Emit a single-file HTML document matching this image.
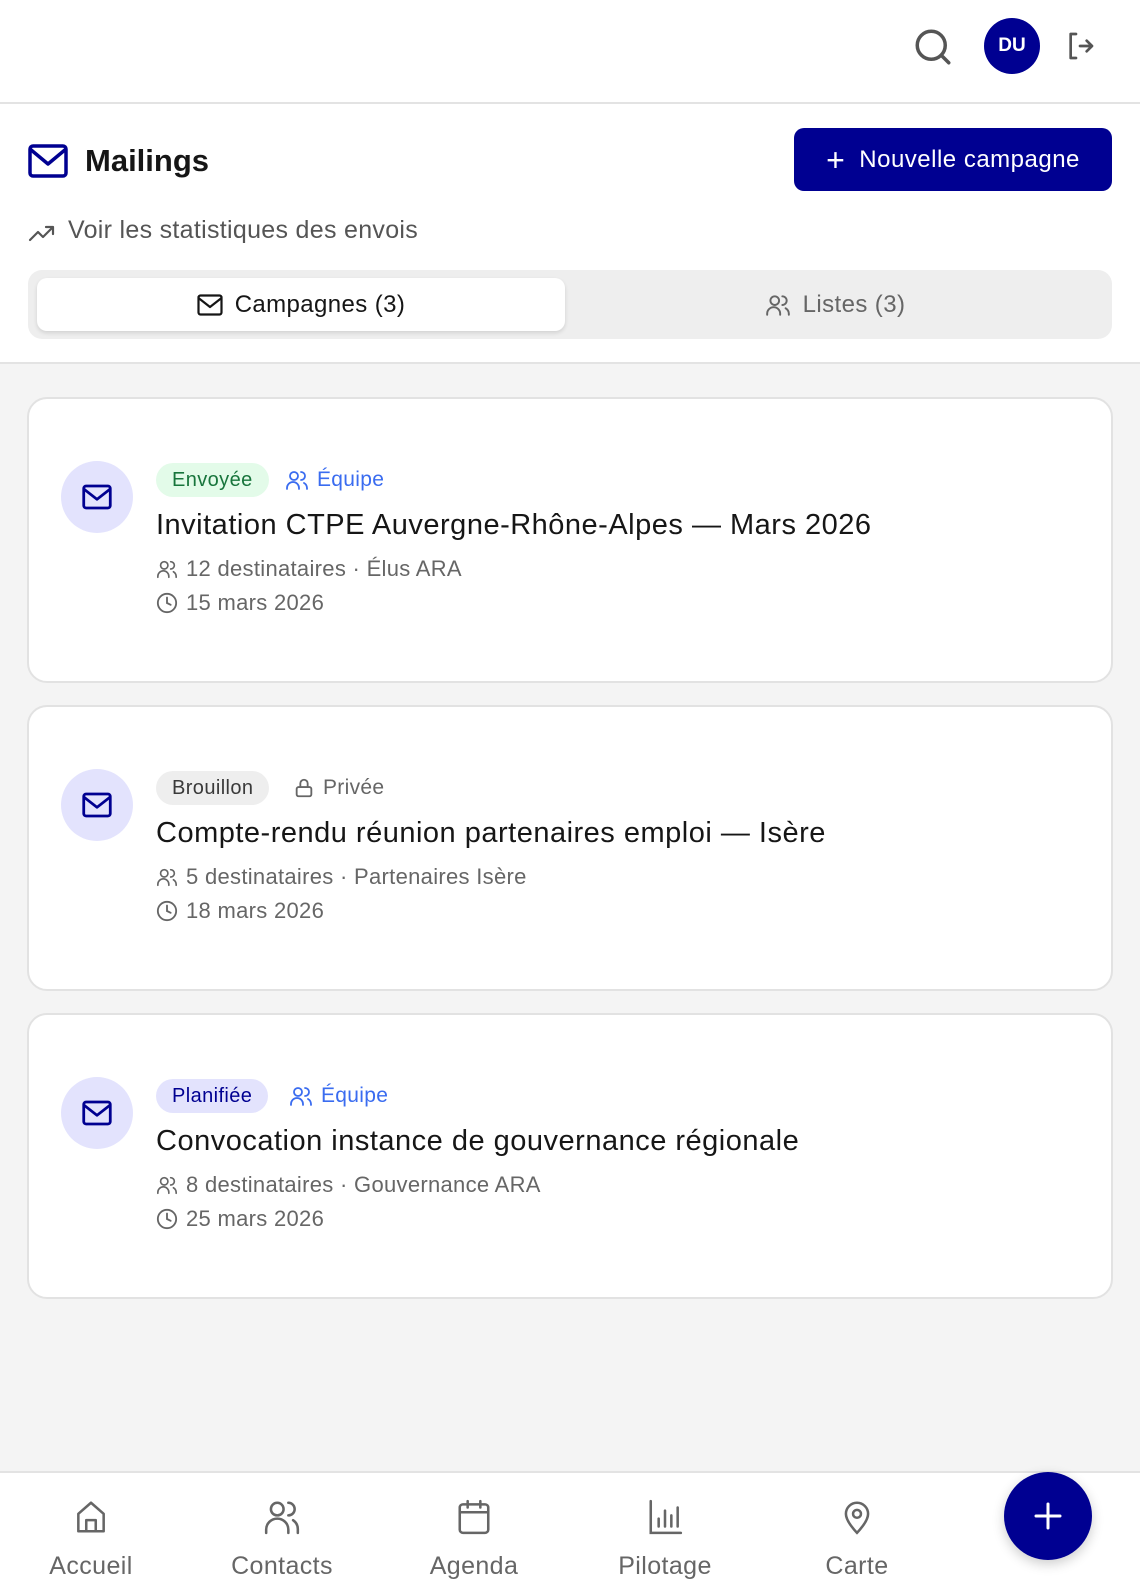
<!DOCTYPE html>
<html><head><meta charset="utf-8"><style>
*{box-sizing:border-box;margin:0;padding:0}
body{width:1140px;height:1592px;background:#f4f4f4;font-family:"Liberation Sans",sans-serif;position:relative;overflow:hidden;color:#161616}
.abs{position:absolute}
svg{display:block}
.top{position:absolute;left:0;top:0;width:1140px;height:364px;background:#fff;border-bottom:2px solid #e3e3e3}
.hdrline{position:absolute;left:0;top:102px;width:1140px;height:2px;background:#e3e3e3}
.card{position:absolute;left:27px;width:1086px;height:286px;background:#fff;border:2px solid #e2e2e2;border-radius:20px}
.circ{position:absolute;left:32px;top:62px;width:72px;height:72px;border-radius:50%;background:#e3e3fd;display:flex;align-items:center;justify-content:center}
.badge{position:absolute;left:127px;top:64px;height:34px;border-radius:17px;padding:0 16px;font-size:20px;line-height:34px;letter-spacing:.4px}
.tag{position:absolute;top:64px;height:34px;line-height:34px;font-size:21px;display:flex;align-items:center;gap:8px;letter-spacing:.3px}
.ttl{position:absolute;left:127px;top:110px;font-size:29px;letter-spacing:.5px;color:#161616;white-space:nowrap}
.meta{position:absolute;left:127px;font-size:22px;letter-spacing:.3px;color:#666;display:flex;align-items:center;gap:8px;white-space:nowrap}
.nav{position:absolute;left:0;top:1471px;width:1140px;height:121px;background:#fff;border-top:2px solid #e3e3e3}
.ni{position:absolute;top:24px;width:150px;text-align:center;color:#666;font-size:25px;letter-spacing:.4px}
.ni svg{margin:0 auto 15px}
</style></head><body>
<div class="top"></div>
<div class="hdrline"></div>
<svg class="abs" style="left:912px;top:26px" width="42" height="42" viewBox="0 0 24 24" fill="none" stroke="#555" stroke-width="2" stroke-linecap="round"><circle cx="11" cy="11" r="8"/><path d="M17 17l4 4"/></svg>
<div class="abs" style="left:984px;top:18px;width:56px;height:56px;border-radius:50%;background:#000091;color:#fff;font-weight:bold;font-size:19px;line-height:56px;text-align:center">DU</div>
<svg class="abs" style="left:1064px;top:30px" width="32" height="32" viewBox="0 0 24 24" fill="none" stroke="#555" stroke-width="2" stroke-linecap="round" stroke-linejoin="round"><path d="M9 3H5v18h4M12 12h9M17 8l4 4-4 4"/></svg>
<svg class="abs" style="left:28px;top:144px" width="40" height="34" viewBox="0 0 40 34" fill="none" stroke="#000091" stroke-width="3.5" stroke-linejoin="round"><rect x="2" y="2" width="36" height="30" rx="3"/><path d="M2 5l18 15L38 5"/></svg>
<div class="abs" style="left:85px;top:143px;font-size:31px;font-weight:bold">Mailings</div>
<div class="abs" style="left:794px;top:128px;width:318px;height:63px;background:#000091;border-radius:10px;color:#fff;font-size:24px;letter-spacing:.5px;display:flex;align-items:center;justify-content:center;gap:14px"><span style="font-size:32px;font-weight:300;line-height:1">+</span>Nouvelle campagne</div>
<svg class="abs" style="left:28px;top:222px" width="28" height="22" viewBox="0 0 28 22" fill="none" stroke="#555" stroke-width="2.2" stroke-linecap="round" stroke-linejoin="round"><path d="M2 18l8-8 5 5 10-10M18 5h7v7"/></svg>
<div class="abs" style="left:68px;top:216px;font-size:25px;letter-spacing:.3px;color:#555">Voir les statistiques des envois</div>
<div class="abs" style="left:28px;top:270px;width:1084px;height:69px;background:#eee;border-radius:14px"></div>
<div class="abs" style="left:37px;top:278px;width:528px;height:53px;background:#fff;border-radius:10px;box-shadow:0 2px 4px rgba(0,0,0,.12);display:flex;align-items:center;justify-content:center;gap:12px;font-size:24px;letter-spacing:.4px;color:#161616">
<svg width="26" height="22" viewBox="0 0 26 22" fill="none" stroke="#161616" stroke-width="2.2" stroke-linejoin="round"><rect x="1.5" y="1.5" width="23" height="19" rx="2"/><path d="M1.5 4l11.5 9L24.5 4"/></svg>Campagnes (3)</div>
<div class="abs" style="left:565px;top:278px;width:540px;height:53px;display:flex;align-items:center;justify-content:center;gap:12px;font-size:24px;letter-spacing:.4px;color:#666">
<svg width="26" height="26" viewBox="0 0 24 24" fill="none" stroke="#666" stroke-width="1.8" stroke-linecap="round"><circle cx="9" cy="8" r="4"/><path d="M2 21v-1a6 6 0 0 1 12 0v1M16 4a4 4 0 0 1 0 8M19 15a6 6 0 0 1 3 5v1"/></svg>Listes (3)</div>

<div class="card" style="top:397px">
 <div class="circ"><svg width="30" height="26" viewBox="0 0 26 22" fill="none" stroke="#000091" stroke-width="2.4" stroke-linejoin="round"><rect x="1.5" y="1.5" width="23" height="19" rx="2"/><path d="M1.5 4l11.5 9L24.5 4"/></svg></div>
 <div class="badge" style="background:#e3fbe9;color:#18753c">Envoyée</div>
 <div class="tag" style="left:256px;color:#3a6cf0"><svg width="24" height="24" viewBox="0 0 24 24" fill="none" stroke="#3a6cf0" stroke-width="1.8" stroke-linecap="round"><circle cx="9" cy="8" r="4"/><path d="M2 21v-1a6 6 0 0 1 12 0v1M16 4a4 4 0 0 1 0 8M19 15a6 6 0 0 1 3 5v1"/></svg>Équipe</div>
 <div class="ttl">Invitation CTPE Auvergne-Rhône-Alpes — Mars 2026</div>
 <div class="meta" style="top:157px"><svg width="22" height="22" viewBox="0 0 24 24" fill="none" stroke="#666" stroke-width="1.8" stroke-linecap="round"><circle cx="9" cy="8" r="4"/><path d="M2 21v-1a6 6 0 0 1 12 0v1M16 4a4 4 0 0 1 0 8M19 15a6 6 0 0 1 3 5v1"/></svg>12 destinataires · Élus ARA</div>
 <div class="meta" style="top:191px"><svg width="22" height="22" viewBox="0 0 24 24" fill="none" stroke="#666" stroke-width="2" stroke-linecap="round"><circle cx="12" cy="12" r="10"/><path d="M12 6v6l4 2"/></svg>15 mars 2026</div>
</div>
<div class="card" style="top:705px">
 <div class="circ"><svg width="30" height="26" viewBox="0 0 26 22" fill="none" stroke="#000091" stroke-width="2.4" stroke-linejoin="round"><rect x="1.5" y="1.5" width="23" height="19" rx="2"/><path d="M1.5 4l11.5 9L24.5 4"/></svg></div>
 <div class="badge" style="background:#eee;color:#3a3a3a">Brouillon</div>
 <div class="tag" style="left:264px;color:#666"><svg width="22" height="22" viewBox="0 0 24 24" fill="none" stroke="#666" stroke-width="2" stroke-linecap="round"><rect x="4" y="11" width="16" height="10" rx="2"/><path d="M8 11V7a4 4 0 0 1 8 0v4"/></svg>Privée</div>
 <div class="ttl">Compte-rendu réunion partenaires emploi — Isère</div>
 <div class="meta" style="top:157px"><svg width="22" height="22" viewBox="0 0 24 24" fill="none" stroke="#666" stroke-width="1.8" stroke-linecap="round"><circle cx="9" cy="8" r="4"/><path d="M2 21v-1a6 6 0 0 1 12 0v1M16 4a4 4 0 0 1 0 8M19 15a6 6 0 0 1 3 5v1"/></svg>5 destinataires · Partenaires Isère</div>
 <div class="meta" style="top:191px"><svg width="22" height="22" viewBox="0 0 24 24" fill="none" stroke="#666" stroke-width="2" stroke-linecap="round"><circle cx="12" cy="12" r="10"/><path d="M12 6v6l4 2"/></svg>18 mars 2026</div>
</div>
<div class="card" style="top:1013px">
 <div class="circ"><svg width="30" height="26" viewBox="0 0 26 22" fill="none" stroke="#000091" stroke-width="2.4" stroke-linejoin="round"><rect x="1.5" y="1.5" width="23" height="19" rx="2"/><path d="M1.5 4l11.5 9L24.5 4"/></svg></div>
 <div class="badge" style="background:#e3e3fd;color:#000091">Planifiée</div>
 <div class="tag" style="left:260px;color:#3a6cf0"><svg width="24" height="24" viewBox="0 0 24 24" fill="none" stroke="#3a6cf0" stroke-width="1.8" stroke-linecap="round"><circle cx="9" cy="8" r="4"/><path d="M2 21v-1a6 6 0 0 1 12 0v1M16 4a4 4 0 0 1 0 8M19 15a6 6 0 0 1 3 5v1"/></svg>Équipe</div>
 <div class="ttl">Convocation instance de gouvernance régionale</div>
 <div class="meta" style="top:157px"><svg width="22" height="22" viewBox="0 0 24 24" fill="none" stroke="#666" stroke-width="1.8" stroke-linecap="round"><circle cx="9" cy="8" r="4"/><path d="M2 21v-1a6 6 0 0 1 12 0v1M16 4a4 4 0 0 1 0 8M19 15a6 6 0 0 1 3 5v1"/></svg>8 destinataires · Gouvernance ARA</div>
 <div class="meta" style="top:191px"><svg width="22" height="22" viewBox="0 0 24 24" fill="none" stroke="#666" stroke-width="2" stroke-linecap="round"><circle cx="12" cy="12" r="10"/><path d="M12 6v6l4 2"/></svg>25 mars 2026</div>
</div>

<div class="nav">
 <div class="ni" style="left:16px"><svg width="38" height="40" viewBox="0 0 24 24" fill="none" stroke="#666" stroke-width="1.6" stroke-linejoin="round"><path d="M4 21V10l8-7 8 7v11z M9 21v-7h6v7"/></svg>Accueil</div>
 <div class="ni" style="left:207px"><svg width="38" height="40" viewBox="0 0 24 24" fill="none" stroke="#666" stroke-width="1.6" stroke-linecap="round"><circle cx="9" cy="7" r="4"/><path d="M2 22v-2a7 7 0 0 1 14 0v2M16 3a4 4 0 0 1 0 8M19 14a7 7 0 0 1 3 6v2"/></svg>Contacts</div>
 <div class="ni" style="left:399px"><svg width="38" height="40" viewBox="0 0 24 24" fill="none" stroke="#666" stroke-width="1.6" stroke-linecap="round"><rect x="3" y="4" width="18" height="18" rx="2"/><path d="M3 9h18M8 2v4M16 2v4"/></svg>Agenda</div>
 <div class="ni" style="left:590px"><svg width="38" height="40" viewBox="0 0 24 24" fill="none" stroke="#666" stroke-width="1.6" stroke-linecap="round"><path d="M3 2v20h19M8 18v-5M12 18V8M16 18v-7M20 18V6"/></svg>Pilotage</div>
 <div class="ni" style="left:782px"><svg width="38" height="40" viewBox="0 0 24 24" fill="none" stroke="#666" stroke-width="1.6"><path d="M12 22s-7-7-7-12a7 7 0 0 1 14 0c0 5-7 12-7 12z"/><circle cx="12" cy="10" r="2.5"/></svg>Carte</div>
</div>
<div class="abs" style="left:1004px;top:1472px;width:88px;height:88px;border-radius:50%;background:#000091;box-shadow:0 4px 12px rgba(0,0,0,.2)"><svg width="88" height="88" viewBox="0 0 88 88" stroke="#fff" stroke-width="3" stroke-linecap="round"><path d="M44 32v24M32 44h24"/></svg></div>
</body></html>
